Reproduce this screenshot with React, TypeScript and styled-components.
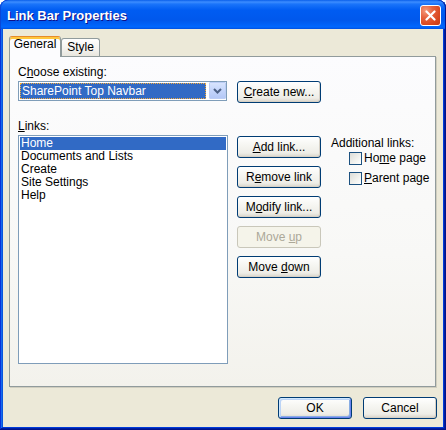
import React from 'react';
import styled, { createGlobalStyle } from 'styled-components';

const Global = createGlobalStyle`
  html, body { margin: 0; padding: 0; background: #ffffff; }
  body { font-family: "Liberation Sans", Arial, sans-serif; font-size: 12px; color: #000; }
  * { box-sizing: border-box; }
`;

const Window = styled.div`
  width: 446px;
  height: 430px;
  display: flex;
  flex-direction: column;
  background: #0555E8;
  border-radius: 8px 8px 0 0;
  overflow: hidden;
  box-shadow: inset -1px -1px #00138c, inset 1px 1px #0831d9, inset -2px -2px #001ea0,
    inset 2px 2px #166aee, inset -3px -3px #003bda, inset 3px 3px #0855dd;
`;

const TitleBar = styled.div`
  height: 29px;
  flex: none;
  display: flex;
  align-items: center;
  justify-content: space-between;
  padding: 0 5px 0 7px;
  border-radius: 8px 8px 0 0;
  background: linear-gradient(180deg, #0A5FEA 0%, #3D8DFF 7%, #1A74FA 14%, #005CF2 35%, #0058EC 70%, #0064FA 88%, #0068FF 93%, #0050E0 100%);
  box-shadow: inset 1px 0 #0A47D8, inset -1px 0 #00138c;
`;

const TitleText = styled.span`
  color: #fff;
  font-family: "Liberation Sans", Arial, sans-serif;
  font-weight: bold;
  font-size: 13px;
  text-shadow: 1px 1px #0F1089;
  padding-top: 1px;
`;

const CloseButton = styled.div`
  width: 21px;
  height: 21px;
  border: 1px solid #fff;
  border-radius: 3px;
  background: radial-gradient(circle at 25% 25%, #F59A7C 0%, #E6633E 35%, #D9481F 70%, #C43A14 100%);
  display: flex;
  align-items: center;
  justify-content: center;
  margin-top: 1px;
`;

const Body = styled.div`
  flex: 1;
  margin: 0 3px 3px 3px;
  background: #ECE9D8;
  display: flex;
  flex-direction: column;
  padding: 7px 6px 0 6px;
`;

const TabStrip = styled.div`
  display: flex;
  align-items: flex-end;
  height: 20px;
`;

const Tab = styled.div<{ $active?: boolean; $w: number }>`
  width: ${p => p.$w}px;
  height: ${p => (p.$active ? 21 : 18)}px;
  margin-bottom: ${p => (p.$active ? -1 : 0)}px;
  position: relative;
  z-index: ${p => (p.$active ? 2 : 1)};
  display: flex;
  justify-content: center;
  align-items: flex-start;
  padding-top: ${p => (p.$active ? 1 : 2)}px;
  border: 1px solid #919B9C;
  border-bottom: none;
  border-top: 1px solid ${p => (p.$active ? '#E68B2C' : '#919B9C')};
  border-radius: 3px 3px 0 0;
  background: ${p => (p.$active ? '#FCFCFE' : 'linear-gradient(180deg, #FFFFFF 0%, #F3F2EE 60%, #E8E6DE 100%)')};
  box-shadow: ${p => (p.$active ? 'inset 0 2px #FFC73C' : 'none')};
  line-height: 13px;
  white-space: nowrap;
`;

const TabLabel = styled.span<{ $active?: boolean }>`
  margin-top: ${p => (p.$active ? 2 : 0)}px;
`;

const TabPanel = styled.div`
  width: 427px;
  height: 331px;
  border: 1px solid #919B9C;
  box-shadow: 1px 1px 0 #D0CEBF;
  background: linear-gradient(180deg, #FCFCFE 0%, #F8F8F6 60%, #F3F2EC 100%);
  display: flex;
  flex-direction: column;
  padding: 9px 8px 0 8px;
`;

const FieldLabel = styled.div<{ $top?: number }>`
  line-height: 13px;
  height: 13px;
  margin-top: ${p => p.$top ?? 0}px;
  margin-bottom: 2px;
`;

const Row = styled.div`
  display: flex;
  align-items: flex-start;
`;

const ComboBox = styled.div`
  width: 209px;
  height: 20px;
  border: 1px solid #7F9DB9;
  background: #fff;
  display: flex;
  padding: 1px 0 0 1px;
  flex: none;
`;

const ComboValue = styled.div`
  flex: 1;
  height: 16px;
  margin: 0 3px 0 0;
  background: #316AC5;
  color: #fff;
  border: 1px dotted #F2A93B;
  line-height: 14px;
  padding-left: 1px;
  white-space: nowrap;
`;

const ComboArrow = styled.div`
  width: 17px;
  height: 17px;
  margin-top: -1px;
  border: 1px solid #BCCDF5;
  border-radius: 1px;
  background: linear-gradient(180deg, #D8E4FD 0%, #C4D5FB 50%, #B4C8F6 100%);
  display: flex;
  align-items: center;
  justify-content: center;
`;

const XPButton = styled.button<{ $w?: number; $default?: boolean }>`
  width: ${p => p.$w ?? 84}px;
  height: 22px;
  padding: 0;
  border: 1px solid #003C74;
  border-radius: 3px;
  background: linear-gradient(180deg, #FFFFFF 0%, #F7F7F3 35%, #EEEDE7 80%, #D8D3C8 100%);
  font-family: "Liberation Sans", Arial, sans-serif;
  font-size: 12px;
  color: #000;
  display: flex;
  align-items: center;
  justify-content: center;
  flex: none;
  white-space: nowrap;
  box-shadow: ${p =>
    p.$default
      ? 'inset 1px 1px #CEE7FF, inset -1px -1px #6982EE, inset 2px 2px #BCD4F6, inset -2px -2px #89ADE4'
      : 'inset -1px -1px #D6D0C5'};
  &:disabled {
    border-color: #C9C7BA;
    background: #F5F4EA;
    color: #ACA899;
    box-shadow: none;
  }
`;

const AccessKey = styled.u`
  text-decoration: underline;
  text-underline-offset: 1px;
`;

const ListBox = styled.div`
  width: 210px;
  height: 229px;
  border: 1px solid #7F9DB9;
  background: #fff;
  padding: 1px 1px;
  flex: none;
`;

const ListItem = styled.div<{ $selected?: boolean }>`
  height: 13px;
  line-height: 13px;
  padding-left: 1px;
  background: ${p => (p.$selected ? '#316AC5' : 'transparent')};
  color: ${p => (p.$selected ? '#fff' : '#000')};
  white-space: nowrap;
`;

const ButtonColumn = styled.div`
  display: flex;
  flex-direction: column;
  gap: 8px;
  margin-left: 9px;
  padding-top: 1px;
  flex: none;
`;

const SideColumn = styled.div`
  display: flex;
  flex-direction: column;
  margin-left: 10px;
  padding-top: 2px;
  flex: none;
  white-space: nowrap;
`;

const SideLabel = styled.div`
  line-height: 13px;
`;

const CheckRow = styled.label`
  display: flex;
  align-items: center;
  gap: 2px;
  height: 13px;
  line-height: 13px;
  margin-left: 18px;
  margin-top: 2px;
  white-space: nowrap;
  & + & { margin-top: 7px; }
`;

const CheckBox = styled.span`
  width: 13px;
  height: 13px;
  flex: none;
  border: 1px solid #1C5180;
  background: linear-gradient(135deg, #DCDCD7 0%, #F2F2EE 60%, #FFFFFF 100%);
`;

const Footer = styled.div`
  display: flex;
  justify-content: flex-end;
  gap: 11px;
  margin-top: 10px;
`;

const links = ['Home', 'Documents and Lists', 'Create', 'Site Settings', 'Help'];

export default function App() {
  return (
    <>
      <Global />
      <Window>
        <TitleBar>
          <TitleText>Link Bar Properties</TitleText>
          <CloseButton>
            <svg width="11" height="11" viewBox="0 0 11 11">
              <path d="M1.5 1.5 L9.5 9.5 M9.5 1.5 L1.5 9.5" stroke="#fff" strokeWidth="2.2" strokeLinecap="round" />
            </svg>
          </CloseButton>
        </TitleBar>
        <Body>
          <TabStrip>
            <Tab $active $w={52}>
              <TabLabel>General</TabLabel>
            </Tab>
            <Tab $w={39}>
              <TabLabel>Style</TabLabel>
            </Tab>
          </TabStrip>
          <TabPanel>
            <FieldLabel>
              C<AccessKey>h</AccessKey>oose existing:
            </FieldLabel>
            <Row>
              <ComboBox>
                <ComboValue>SharePoint Top Navbar</ComboValue>
                <ComboArrow>
                  <svg width="9" height="6" viewBox="0 0 9 6">
                    <path d="M1 1 L4.5 4.5 L8 1" fill="none" stroke="#4D6185" strokeWidth="2" />
                  </svg>
                </ComboArrow>
              </ComboBox>
              <XPButton style={{ marginLeft: 10 }} type="button">
                <span>
                  <AccessKey>C</AccessKey>reate new...
                </span>
              </XPButton>
            </Row>
            <FieldLabel $top={17}>
              <AccessKey>L</AccessKey>inks:
            </FieldLabel>
            <Row>
              <ListBox>
                {links.map((l, i) => (
                  <ListItem key={l} $selected={i === 0}>
                    {l}
                  </ListItem>
                ))}
              </ListBox>
              <ButtonColumn>
                <XPButton type="button">
                  <span>
                    <AccessKey>A</AccessKey>dd link...
                  </span>
                </XPButton>
                <XPButton type="button">
                  <span>
                    R<AccessKey>e</AccessKey>move link
                  </span>
                </XPButton>
                <XPButton type="button">
                  <span>
                    M<AccessKey>o</AccessKey>dify link...
                  </span>
                </XPButton>
                <XPButton type="button" disabled>
                  <span>
                    Move <AccessKey>u</AccessKey>p
                  </span>
                </XPButton>
                <XPButton type="button">
                  <span>
                    Move <AccessKey>d</AccessKey>own
                  </span>
                </XPButton>
              </ButtonColumn>
              <SideColumn>
                <SideLabel>Additional links:</SideLabel>
                <CheckRow>
                  <CheckBox />
                  <span>
                    Ho<AccessKey>m</AccessKey>e page
                  </span>
                </CheckRow>
                <CheckRow>
                  <CheckBox />
                  <span>
                    <AccessKey>P</AccessKey>arent page
                  </span>
                </CheckRow>
              </SideColumn>
            </Row>
          </TabPanel>
          <Footer>
            <XPButton $w={74} $default type="button">
              OK
            </XPButton>
            <XPButton $w={74} type="button">
              Cancel
            </XPButton>
          </Footer>
        </Body>
      </Window>
    </>
  );
}
